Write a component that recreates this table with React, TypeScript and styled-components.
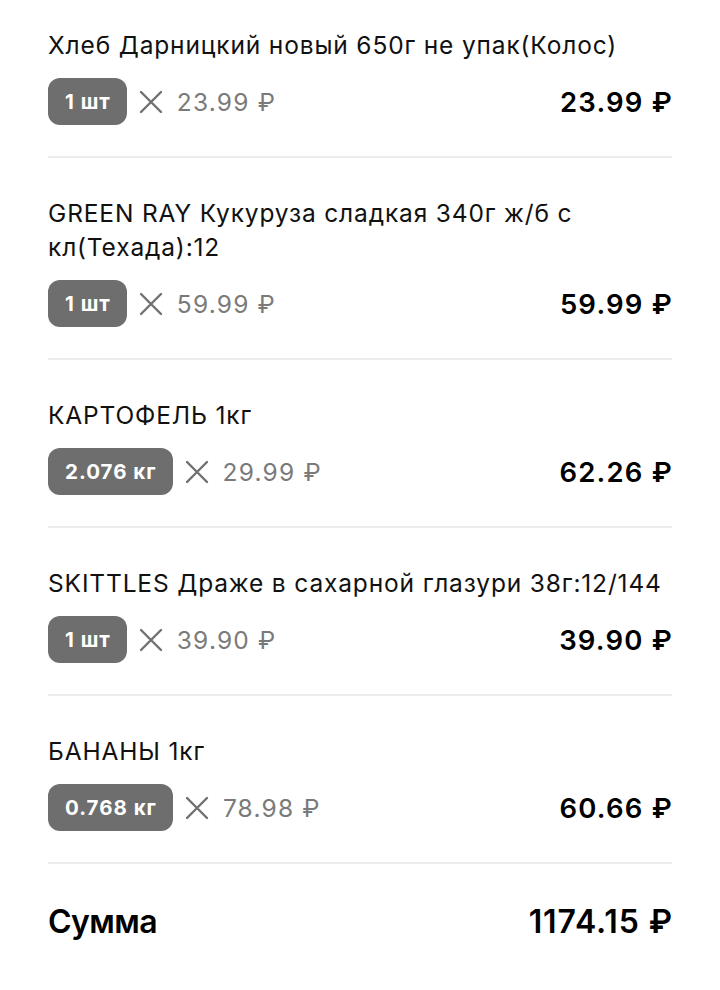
import React from "react";
import styled, { createGlobalStyle } from "styled-components";

const Global = createGlobalStyle`
  html, body { margin: 0; padding: 0; background: #fff; }
  body { font-family: Inter, "Noto Sans", sans-serif; -webkit-font-smoothing: antialiased; }
`;

const Page = styled.div`
  width: 720px;
  box-sizing: border-box;
  padding: 0 48px 0 48px;
`;

const Item = styled.div<{ $first?: boolean }>`
  padding-top: ${(p) => (p.$first ? "28px" : "38px")};
  padding-bottom: 31px;
  border-bottom: 2px solid #ececec;
  display: flex;
  flex-direction: column;
  gap: 16px;
`;

const Title = styled.div`
  font-size: 24.5px;
  line-height: 34px;
  color: #111;
  letter-spacing: 0.85px;
`;

const Row = styled.div`
  display: flex;
  align-items: center;
  height: 47px;
`;

const Badge = styled.div`
  height: 47px;
  box-sizing: border-box;
  padding: 0 16px 0 17px;
  border-radius: 12px;
  background: #6e6e6e;
  color: #fff;
  font-weight: 700;
  font-size: 20.5px;
  letter-spacing: 1px;
  display: flex;
  align-items: center;
`;

const Times = styled.svg`
  width: 24px;
  height: 24px;
  margin-left: 12px;
  margin-right: 14px;
  flex-shrink: 0;
`;

const UnitPrice = styled.div`
  font-size: 24.5px;
  color: #7a7a7a;
  letter-spacing: 1.2px;
`;

const Total = styled.div`
  margin-left: auto;
  margin-right: -1px;
  font-size: 27.5px;
  font-weight: 600;
  color: #000;
  letter-spacing: 1.2px;
`;

const SumRow = styled.div`
  display: flex;
  align-items: center;
  justify-content: space-between;
  padding-top: 38px;
  font-size: 32px;
  font-weight: 600;
  color: #000;
`;

const SumLabel = styled.span`
  letter-spacing: -0.6px;
`;

const SumValue = styled.span`
  letter-spacing: 0.9px;
  margin-right: -1px;
`;

const items = [
  { title: "Хлеб Дарницкий новый 650г не упак(Колос)", qty: "1 шт", price: "23.99 ₽", total: "23.99 ₽" },
  { title: "GREEN RAY Кукуруза сладкая 340г ж/б с кл(Техада):12", qty: "1 шт", price: "59.99 ₽", total: "59.99 ₽" },
  { title: "КАРТОФЕЛЬ 1кг", qty: "2.076 кг", price: "29.99 ₽", total: "62.26 ₽" },
  { title: "SKITTLES Драже в сахарной глазури 38г:12/144", qty: "1 шт", price: "39.90 ₽", total: "39.90 ₽" },
  { title: "БАНАНЫ 1кг", qty: "0.768 кг", price: "78.98 ₽", total: "60.66 ₽" },
];

export default function App() {
  return (
    <>
      <Global />
      <Page>
        {items.map((it, i) => (
          <Item key={i} $first={i === 0}>
            <Title>{it.title}</Title>
            <Row>
              <Badge>{it.qty}</Badge>
              <Times viewBox="0 0 24 24">
                <path d="M2 2 L22 22 M22 2 L2 22" stroke="#707070" strokeWidth="2.4" strokeLinecap="round" fill="none" />
              </Times>
              <UnitPrice>{it.price}</UnitPrice>
              <Total>{it.total}</Total>
            </Row>
          </Item>
        ))}
        <SumRow>
          <SumLabel>Сумма</SumLabel>
          <SumValue>1174.15 ₽</SumValue>
        </SumRow>
      </Page>
    </>
  );
}
